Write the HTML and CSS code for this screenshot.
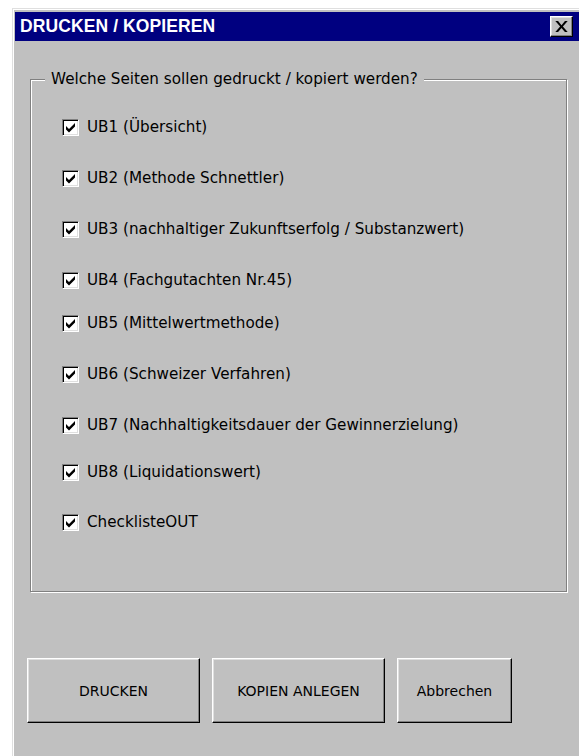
FILE: index.html
```html
<!DOCTYPE html>
<html lang="de">
<head>
<meta charset="utf-8">
<title>DRUCKEN / KOPIEREN</title>
<link rel="stylesheet" href="styles.css">
</head>
<body>
<div class="window">
  <div class="titlebar">
    <span class="title">DRUCKEN / KOPIEREN</span>
    <button class="close" type="button" aria-label="Schließen">
      <svg width="9" height="8" viewBox="0 0 9 8"><path d="M0 0h2l2.5 3 2.5-3h2L5.5 4 9 8H7L4.5 5 2 8H0l3.5-4z" fill="#000"/></svg>
    </button>
  </div>
  <div class="client">
    <fieldset class="group">
      <legend>Welche Seiten sollen gedruckt / kopiert werden?</legend>
      <div class="rows">
        <label class="row first"><span class="box"><svg width="13" height="13" viewBox="0 0 13 13"><path d="M2 5v3.5l3 3 6-6V2L5 8z" fill="#000"/></svg></span>UB1 (Übersicht)</label>
        <label class="row"><span class="box"><svg width="13" height="13" viewBox="0 0 13 13"><path d="M2 5v3.5l3 3 6-6V2L5 8z" fill="#000"/></svg></span>UB2 (Methode Schnettler)</label>
        <label class="row"><span class="box"><svg width="13" height="13" viewBox="0 0 13 13"><path d="M2 5v3.5l3 3 6-6V2L5 8z" fill="#000"/></svg></span>UB3 (nachhaltiger Zukunftserfolg / Substanzwert)</label>
        <label class="row"><span class="box"><svg width="13" height="13" viewBox="0 0 13 13"><path d="M2 5v3.5l3 3 6-6V2L5 8z" fill="#000"/></svg></span>UB4 (Fachgutachten Nr.45)</label>
        <label class="row near"><span class="box"><svg width="13" height="13" viewBox="0 0 13 13"><path d="M2 5v3.5l3 3 6-6V2L5 8z" fill="#000"/></svg></span>UB5 (Mittelwertmethode)</label>
        <label class="row"><span class="box"><svg width="13" height="13" viewBox="0 0 13 13"><path d="M2 5v3.5l3 3 6-6V2L5 8z" fill="#000"/></svg></span>UB6 (Schweizer Verfahren)</label>
        <label class="row"><span class="box"><svg width="13" height="13" viewBox="0 0 13 13"><path d="M2 5v3.5l3 3 6-6V2L5 8z" fill="#000"/></svg></span>UB7 (Nachhaltigkeitsdauer der Gewinnerzielung)</label>
        <label class="row mid"><span class="box"><svg width="13" height="13" viewBox="0 0 13 13"><path d="M2 5v3.5l3 3 6-6V2L5 8z" fill="#000"/></svg></span>UB8 (Liquidationswert)</label>
        <label class="row close-gap"><span class="box"><svg width="13" height="13" viewBox="0 0 13 13"><path d="M2 5v3.5l3 3 6-6V2L5 8z" fill="#000"/></svg></span>ChecklisteOUT</label>
      </div>
    </fieldset>
    <div class="buttons">
      <button class="btn wide" type="button">DRUCKEN</button>
      <button class="btn wide" type="button">KOPIEN ANLEGEN</button>
      <button class="btn" type="button">Abbrechen</button>
    </div>
  </div>
</div>
</body>
</html>
```

FILE: styles.css
```css
html, body {
  margin: 0;
  padding: 0;
  background: #ffffff;
  overflow: hidden;
}

body {
  font-family: "DejaVu Sans", "Noto Sans", sans-serif;
  font-size: 15.2px;
  color: #000;
}

/* dialog frame */
.window {
  box-sizing: border-box;
  width: 574px;
  height: 760px;
  margin: 8px 0 0 12px;
  background: #c0c0c0;
  border-top: 1px solid #dfdfdf;
  border-left: 1px solid #dfdfdf;
  box-shadow: inset 1px 1px 0 #ffffff;
  padding: 3px 3px 0 2px;
  display: flex;
  flex-direction: column;
}

.titlebar {
  height: 29px;
  flex: none;
  background: #000080;
  display: flex;
  align-items: center;
  justify-content: space-between;
  padding: 0 10px 0 5px;
}

.title {
  font-family: "Liberation Sans", Arial, sans-serif;
  font-weight: bold;
  font-size: 17.5px;
  color: #ffffff;
  letter-spacing: 0.1px;
}

.close {
  box-sizing: border-box;
  width: 23px;
  height: 21px;
  padding: 0;
  margin: 0;
  background: #c0c0c0;
  border: 1px solid;
  border-color: #ffffff #000000 #000000 #ffffff;
  box-shadow: inset -1px -1px 0 #808080, inset 1px 1px 0 #dfdfdf;
  display: flex;
  align-items: center;
  justify-content: center;
}

.close svg {
  width: 13px;
  height: 11px;
}

.client {
  padding: 0 0 0 12px;
}

/* etched group frame */
.group {
  box-sizing: border-box;
  width: 537px;
  height: 522px;
  margin: 29px 0 0 3px;
  padding: 0;
  border: 1px solid #808080;
  box-shadow: inset 1px 1px 0 #ffffff, 1px 1px 0 #ffffff;
  min-width: 0;
}

.group legend {
  margin-left: 14px;
  padding: 0 6px;
  background: #c0c0c0;
  line-height: 18px;
}

.rows {
  display: flex;
  flex-direction: column;
  padding-left: 31px;
}

.row {
  display: flex;
  align-items: center;
  height: 20px;
  margin-top: 31px;
  white-space: nowrap;
}

.row.first { margin-top: 29px; }
.row.near { margin-top: 23px; }
.row.mid { margin-top: 27px; }
.row.close-gap { margin-top: 30px; }

/* sunken check box */
.box {
  box-sizing: border-box;
  width: 17px;
  height: 17px;
  flex: none;
  margin-right: 8px;
  background: #ffffff;
  border: 1px solid;
  border-color: #808080 #ffffff #ffffff #808080;
  box-shadow: inset 1px 1px 0 #000000, inset -1px -1px 0 #dfdfdf;
  display: flex;
  align-items: center;
  justify-content: center;
}

.box svg {
  display: block;
}

.buttons {
  display: flex;
  gap: 12px;
  margin-top: 66px;
}

.btn {
  box-sizing: border-box;
  width: 115px;
  height: 65px;
  padding: 0;
  background: #c0c0c0;
  font-family: "DejaVu Sans", "Noto Sans", sans-serif;
  font-size: 14px;
  color: #000;
  border: 1px solid;
  border-color: #ffffff #000000 #000000 #ffffff;
  box-shadow: inset -1px -1px 0 #808080, inset 1px 1px 0 #dfdfdf;
}

.btn.wide {
  width: 173px;
}
```
